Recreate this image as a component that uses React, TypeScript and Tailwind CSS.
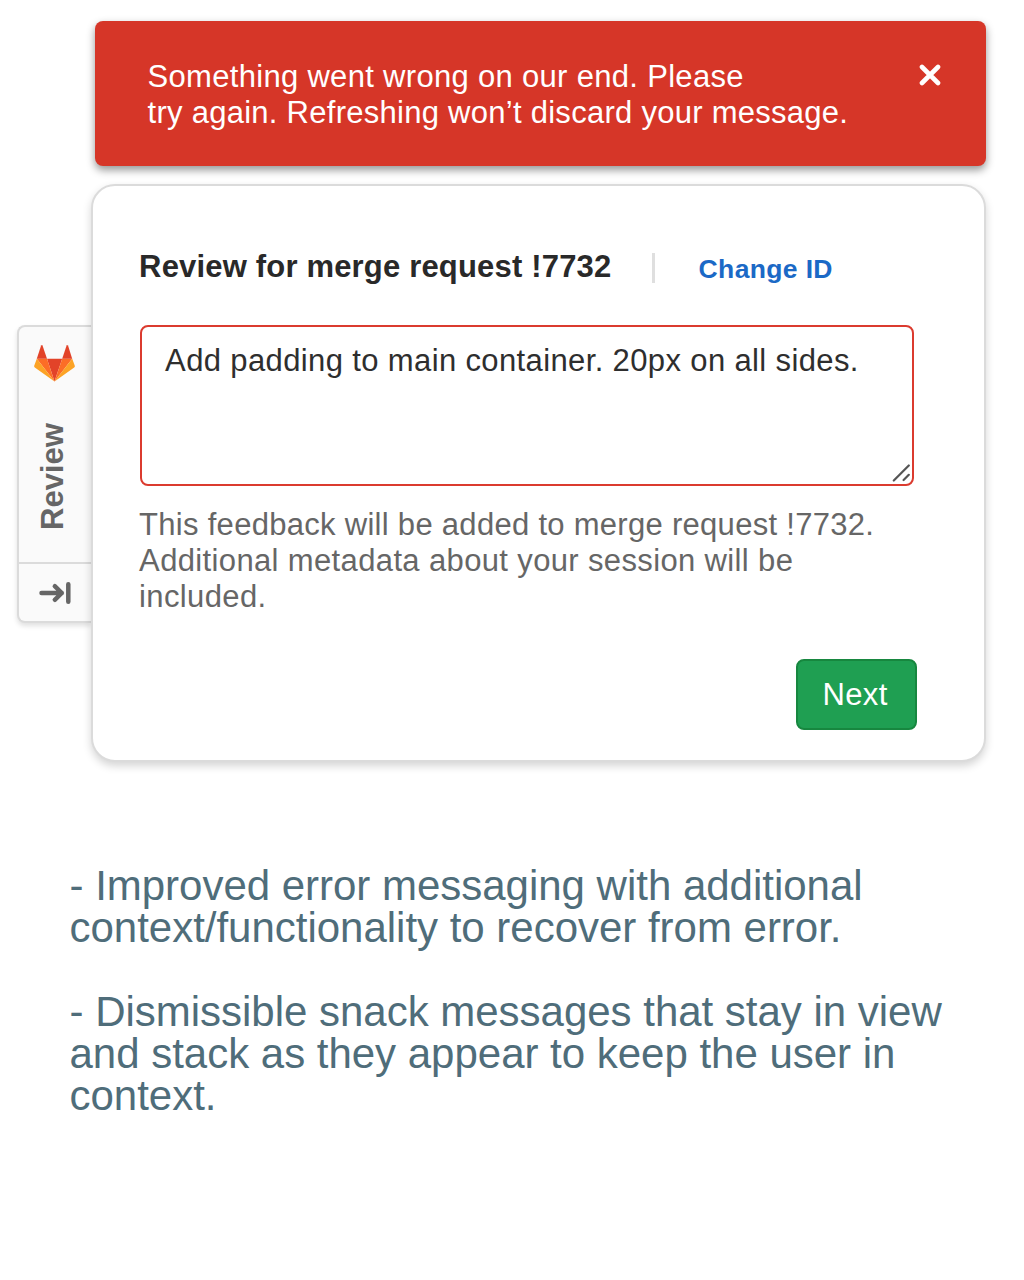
import type { ReactNode } from 'react';

function Line({ className = '', children }: { className?: string; children: ReactNode }) {
  return <span className={`block w-max whitespace-nowrap ${className}`}>{children}</span>;
}

function ErrorSnack() {
  return (
    <div
      role="alert"
      className="ml-[94.5px] flex h-[145px] w-[891.5px] items-start justify-between rounded-[8px] bg-[#d63628] pt-[38px] pr-[45.5px] pl-[53px] text-[31px] leading-[36px] text-white shadow-[0_4px_9px_rgba(0,0,0,0.42)]"
    >
      <p>
        <Line className="tracking-[0.31px]">Something went wrong on our end. Please</Line>
        <Line className="tracking-[0.27px]">try again. Refreshing won’t discard your message.</Line>
      </p>
      <button aria-label="Dismiss" className="mt-[5.5px]">
        <svg width="22" height="22" viewBox="0 0 22 22" fill="none" stroke="white" strokeWidth="4.6" strokeLinecap="round">
          <path d="M3 3L19 19M19 3L3 19" />
        </svg>
      </button>
    </div>
  );
}

function GitLabLogo() {
  return (
    <svg className="mr-[1px]" width="41" height="37" viewBox="0 0 41 37">
      <path d="M20.5 36.5L13 13.7H28.2Z" fill="#e24329" />
      <path d="M20.5 36.5L13 13.7H2.8Z" fill="#fc6d26" />
      <path d="M2.8 13.7L0.2 20.8C0 21.4 0.2 22.1 0.8 22.5L20.5 36.5Z" fill="#fca326" />
      <path d="M2.8 13.7H13L8.5 0.6C8.2 0 7.4 0 7.1 0.6Z" fill="#e24329" />
      <path d="M20.5 36.5L28.2 13.7H38.2Z" fill="#fc6d26" />
      <path d="M38.2 13.7L40.8 20.8C41 21.4 40.8 22.1 40.2 22.5L20.5 36.5Z" fill="#fca326" />
      <path d="M38.2 13.7H28.2L32.6 0.6C32.9 0 33.7 0 34 0.6Z" fill="#e24329" />
    </svg>
  );
}

function SideTab() {
  return (
    <div className="mt-[141px] flex h-[297.5px] w-[74px] shrink-0 flex-col rounded-l-[8px] border-2 border-r-0 border-[#dbdbdb] bg-[#fafafa] shadow-[0_3px_5px_rgba(0,0,0,0.12)]">
      <div className="flex h-[237px] flex-col items-center border-b-2 border-[#dbdbdb] pt-[18px]">
        <GitLabLogo />
        <span className="mt-[38px] mr-[3px] h-[114px] rotate-180 text-center text-[31px] leading-[36px] font-bold text-[#666] [writing-mode:vertical-rl]">
          Review
        </span>
      </div>
      <div className="flex flex-1 items-center justify-center pt-[1px]">
        <svg width="32" height="24" viewBox="0 0 32 24" fill="none" stroke="#666" strokeWidth="4.5" strokeLinecap="round" strokeLinejoin="round">
          <path d="M2.5 12H22.8M15.8 5.2L22.8 12L15.8 18.8M29.3 3.2V20.8" />
        </svg>
      </div>
    </div>
  );
}

function ReviewCard() {
  return (
    <section className="flex h-[577.5px] w-[895.5px] shrink-0 flex-col rounded-[24px] border-2 border-[#dbdbdb] bg-white pl-[46.5px] shadow-[0_4px_9px_rgba(0,0,0,0.17)]">
      <header className="mt-[61px] flex h-[40px] items-center">
        <h1 className="w-[513px] whitespace-nowrap text-[31px] leading-[36px] font-bold tracking-[0.18px] text-[#292929]">
          Review for merge request !7732
        </h1>
        <span className="mt-[1px] h-[30px] w-[3px] bg-[#dfdfdf]" />
        <a className="mt-[3px] ml-[43.5px] whitespace-nowrap text-[26.5px] leading-[30px] font-bold tracking-[0.36px] text-[#1b69c6]">Change ID</a>
      </header>
      <div className="relative mt-[38px] ml-[0.5px] h-[161px] w-[774.5px] rounded-[8px] border-2 border-[#db3b2f] pt-[16px] pl-[23.5px] text-[31px] leading-[36px] text-[#2e2e2e]">
        <Line className="tracking-[0.37px]">Add padding to main container. 20px on all sides.</Line>
        <svg className="absolute right-[1.5px] bottom-[2px]" width="19" height="18" viewBox="0 0 19 18" fill="none" stroke="#555" strokeWidth="2.2" strokeLinecap="round">
          <path d="M1.8 16.5L16.8 1.5M11.6 16L16.8 10.8" />
        </svg>
      </div>
      <p className="mt-[21px] text-[31px] leading-[36px] text-[#666]">
        <Line className="tracking-[0.29px]">This feedback will be added to merge request !7732.</Line>
        <Line className="tracking-[0.36px]">Additional metadata about your session will be</Line>
        <Line className="tracking-[0.37px]">included.</Line>
      </p>
      <button className="mt-[44px] ml-[656.5px] h-[71px] w-[121px] rounded-[8px] border-2 border-[#17873f] bg-[#1f9f52] pr-[2px] text-[31px] leading-[36px] tracking-[0.35px] text-white">
        Next
      </button>
    </section>
  );
}

export default function App() {
  return (
    <main className="flex h-[1280px] w-[1024px] flex-col overflow-hidden bg-white pt-[20.5px] font-['Liberation_Sans',Arial,sans-serif]">
      <ErrorSnack />
      <div className="mt-[18.5px] flex pl-[16.6px]">
        <SideTab />
        <ReviewCard />
      </div>
      <div className="mt-[103.5px] ml-[69.5px] text-[42px] leading-[42px] tracking-[-0.015px] text-[#4f6d7a]">
        <p>
          <Line>- Improved error messaging with additional</Line>
          <Line>context/functionality to recover from error.</Line>
        </p>
        <p className="mt-[42px]">
          <Line>- Dismissible snack messages that stay in view</Line>
          <Line>and stack as they appear to keep the user in</Line>
          <Line>context.</Line>
        </p>
      </div>
    </main>
  );
}
